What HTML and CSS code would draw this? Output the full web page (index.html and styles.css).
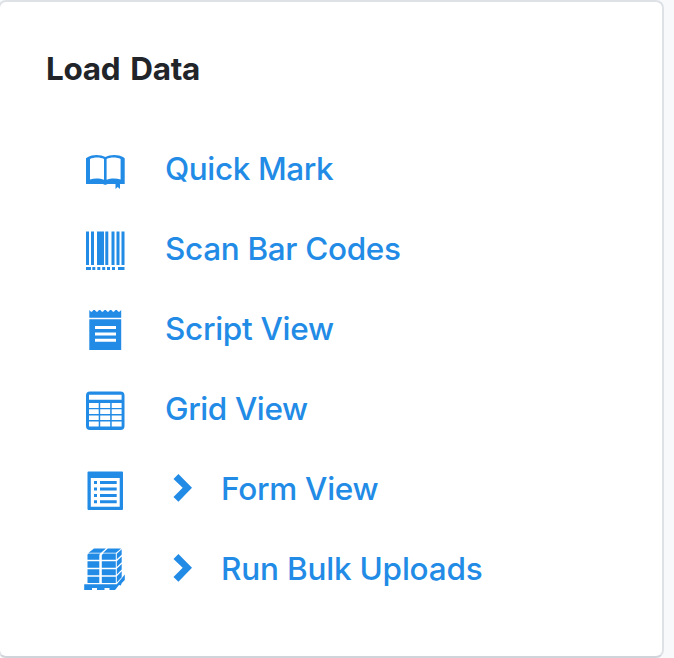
FILE: index.html
```html
<!DOCTYPE html>
<html lang="en">
<head>
<meta charset="utf-8">
<title>Load Data</title>
<link rel="stylesheet" href="styles.css">
</head>
<body>
<section class="card">
  <h2 class="title">Load Data</h2>
  <nav class="menu">
    <a class="item">
      <svg class="icon" viewBox="0 0 60 50"><path fill-rule="evenodd" d="M11 13.300L13 12C17 9.200 26 9.200 30.300 12c4.500-2.800 13.500-2.800 17.700 0l1.700 1.300V39H45v5l-2.300-2-2.200 2v-5H32.500c-.7 1-3.700 1-4.400 0H11zM15 14v20.500c4-1.500 9.800-1.400 14 .3V14c-3.600-2-10.200-2-14 0zM31.600 14v20.800c4-1.700 9.600-1.800 14-.3V14c-3.800-2-10.400-2-14 0z"/></svg>
      <span class="label quick">Quick Mark</span>
    </a>
    <a class="item">
      <svg class="icon" viewBox="0 0 60 50"><path d="M11 6.500h3V40h-3zM16 6.500h3V40h-3zM22 6.500h7V40h-7zM30.300 6.500h3V40h-3zM36.500 6.500h3V40h-3zM41.500 6.500h3V40h-3zM46.500 6.500h3V40h-3zM11 42h5v3h-5zM17.300 42h3v3h-3zM22.300 42h3v3h-3zM27.200 42h3v3h-3zM32 42h3v3h-3zM37 42h3v3h-3zM43 42h6.500v3H43z"/></svg>
      <span class="label scan">Scan Bar Codes</span>
    </a>
    <a class="item">
      <svg class="icon" viewBox="0 0 60 50"><path fill-rule="evenodd" d="M14.300 5l1.600 1.800h1L18.500 5h1.300l1.600 1.800h1L24 5h1.300l1.600 1.800h1L29.500 5h1.300l1.600 1.800h1L35 5h1.300l1.600 1.800h1L40.500 5h1.300l1.600 1.800h1L46.200 5v7.700H14.300zM14.300 14.200h31.900V45H14.300zM20 21v3h21v-3zM20 27.500v3h21v-3zM20 33.700v3h21v-3z"/></svg>
      <span class="label script">Script View</span>
    </a>
    <a class="item">
      <svg class="icon" viewBox="0 0 60 50"><path fill-rule="evenodd" d="M15 6.500h30.500a4 4 0 0 1 4 4V41a4 4 0 0 1-4 4H15a4 4 0 0 1-4-4V10.500a4 4 0 0 1 4-4zM14 9.700v5h32.600v-5zM14 18v5h9.700v-5zM25.200 18v5h10v-5zM36.700 18v5h9.900v-5zM14 24.300v4.800h9.700v-4.800zM25.200 24.300v4.800h10v-4.800zM36.700 24.300v4.800h9.900v-4.800zM14 30.500v4.600h9.700v-4.600zM25.200 30.500v4.600h10v-4.600zM36.700 30.500v4.600h9.900v-4.600zM14 36.500v5h9.700v-5zM25.200 36.500v5h10v-5zM36.700 36.500v5h9.900v-5z"/></svg>
      <span class="label grid">Grid View</span>
    </a>
    <a class="item">
      <svg class="icon" viewBox="0 0 60 50"><path fill-rule="evenodd" d="M13.500 6.500h33.500q1 0 1 1V44q0 1-1 1H13.500q-1 0-1-1V7.500q0-1 1-1zM15.800 13v28.800h28.900V13z"/><path d="M19 16h3v3h-3zM25 16h16.700v3H25zM19 22.500h3v3h-3zM25 22.500h16.700v3H25zM19 29h3v3h-3zM25 29h16.700v3H25zM19 35.300h3v3h-3zM25 35.300h16.700v3H25z"/></svg>
      <svg class="chevron" viewBox="0 0 20 28"><path d="M5.400 0L19 13.800 5.400 27.800.5 23l9.200-9.200L.5 4.900z"/></svg>
      <span class="label form">Form View</span>
    </a>
    <a class="item">
      <svg class="icon tall" viewBox="0 0 60 60"><path d="M19 8.500h12L26 12.800H13.500zM32.800 8.500h13.400L41 12.800H28.200zM12.500 14.500l1-1h11.800l-1 1.500v4.700H12.500zM26.800 15l1.500-1.500h12.500v6.200h-14zM12.500 21.200h11.800v6.500H12.500zM26.800 21.200h14v6.500h-14zM12.500 29.200h11.800v6H12.500zM26.800 29.200h14v6h-14zM12.500 36.700h11.800V43H12.500zM26.800 36.700h14V43h-14zM41.800 13.800l4.900-4.500v5.400l-4.900 4.500zM41.800 21.300l4.900-4.800v5.800l-4.900 4.700zM41.800 28.800l4.900-4.800v5.500l-4.900 5zM41.800 36.300l4.900-5v6l-4.900 5.200zM9.200 44.300h32.600l8-9.800v5.500l-3 3-1 2.400-1.800-.4-4 5h-5.500v-2h-5v2H22v-2h-5v2H9.200z"/></svg>
      <svg class="chevron" viewBox="0 0 20 28"><path d="M5.400 0L19 13.800 5.400 27.800.5 23l9.200-9.200L.5 4.900z"/></svg>
      <span class="label bulk">Run Bulk Uploads</span>
    </a>
  </nav>
</section>
</body>
</html>
```
FILE: styles.css
```css
* { box-sizing: border-box; }
body {
  margin: 0;
  height: 658px;
  overflow: hidden;
  background: #f8f9fa;
  font-family: Inter, "Liberation Sans", sans-serif;
}
.card {
  width: 666px;
  height: 658px;
  margin-left: -2px;
  padding: 46px 46px 0;
  background: #fff;
  border: 2px solid #dee2e6;
  border-bottom-color: #ced4da;
  border-radius: 8px;
}
.title {
  margin: 0;
  height: 82px;
  font-size: 31.5px;
  line-height: 41px;
  font-weight: 700;
  letter-spacing: -0.35px;
  word-spacing: 3px;
  color: #212529;
}
.menu { padding-left: 29px; }
.item {
  display: flex;
  align-items: center;
  height: 80px;
  color: #228be6;
  font-size: 31.5px;
  line-height: 40px;
  white-space: nowrap;
}
.icon {
  width: 60px;
  height: 50px;
  margin-right: 30px;
  fill: currentColor;
  flex: none;
}
.icon.tall { height: 60px; }
.chevron {
  width: 20px;
  height: 28px;
  margin: -4px 28px 0 8px;
  fill: currentColor;
  flex: none;
}
.label { font-weight: 500; margin-top: -3px; letter-spacing: -0.4px; }
.scan { letter-spacing: -0.33px; }
.script { letter-spacing: -0.3px; }
.form { letter-spacing: -0.26px; }
.bulk { letter-spacing: -0.2px; }
```
